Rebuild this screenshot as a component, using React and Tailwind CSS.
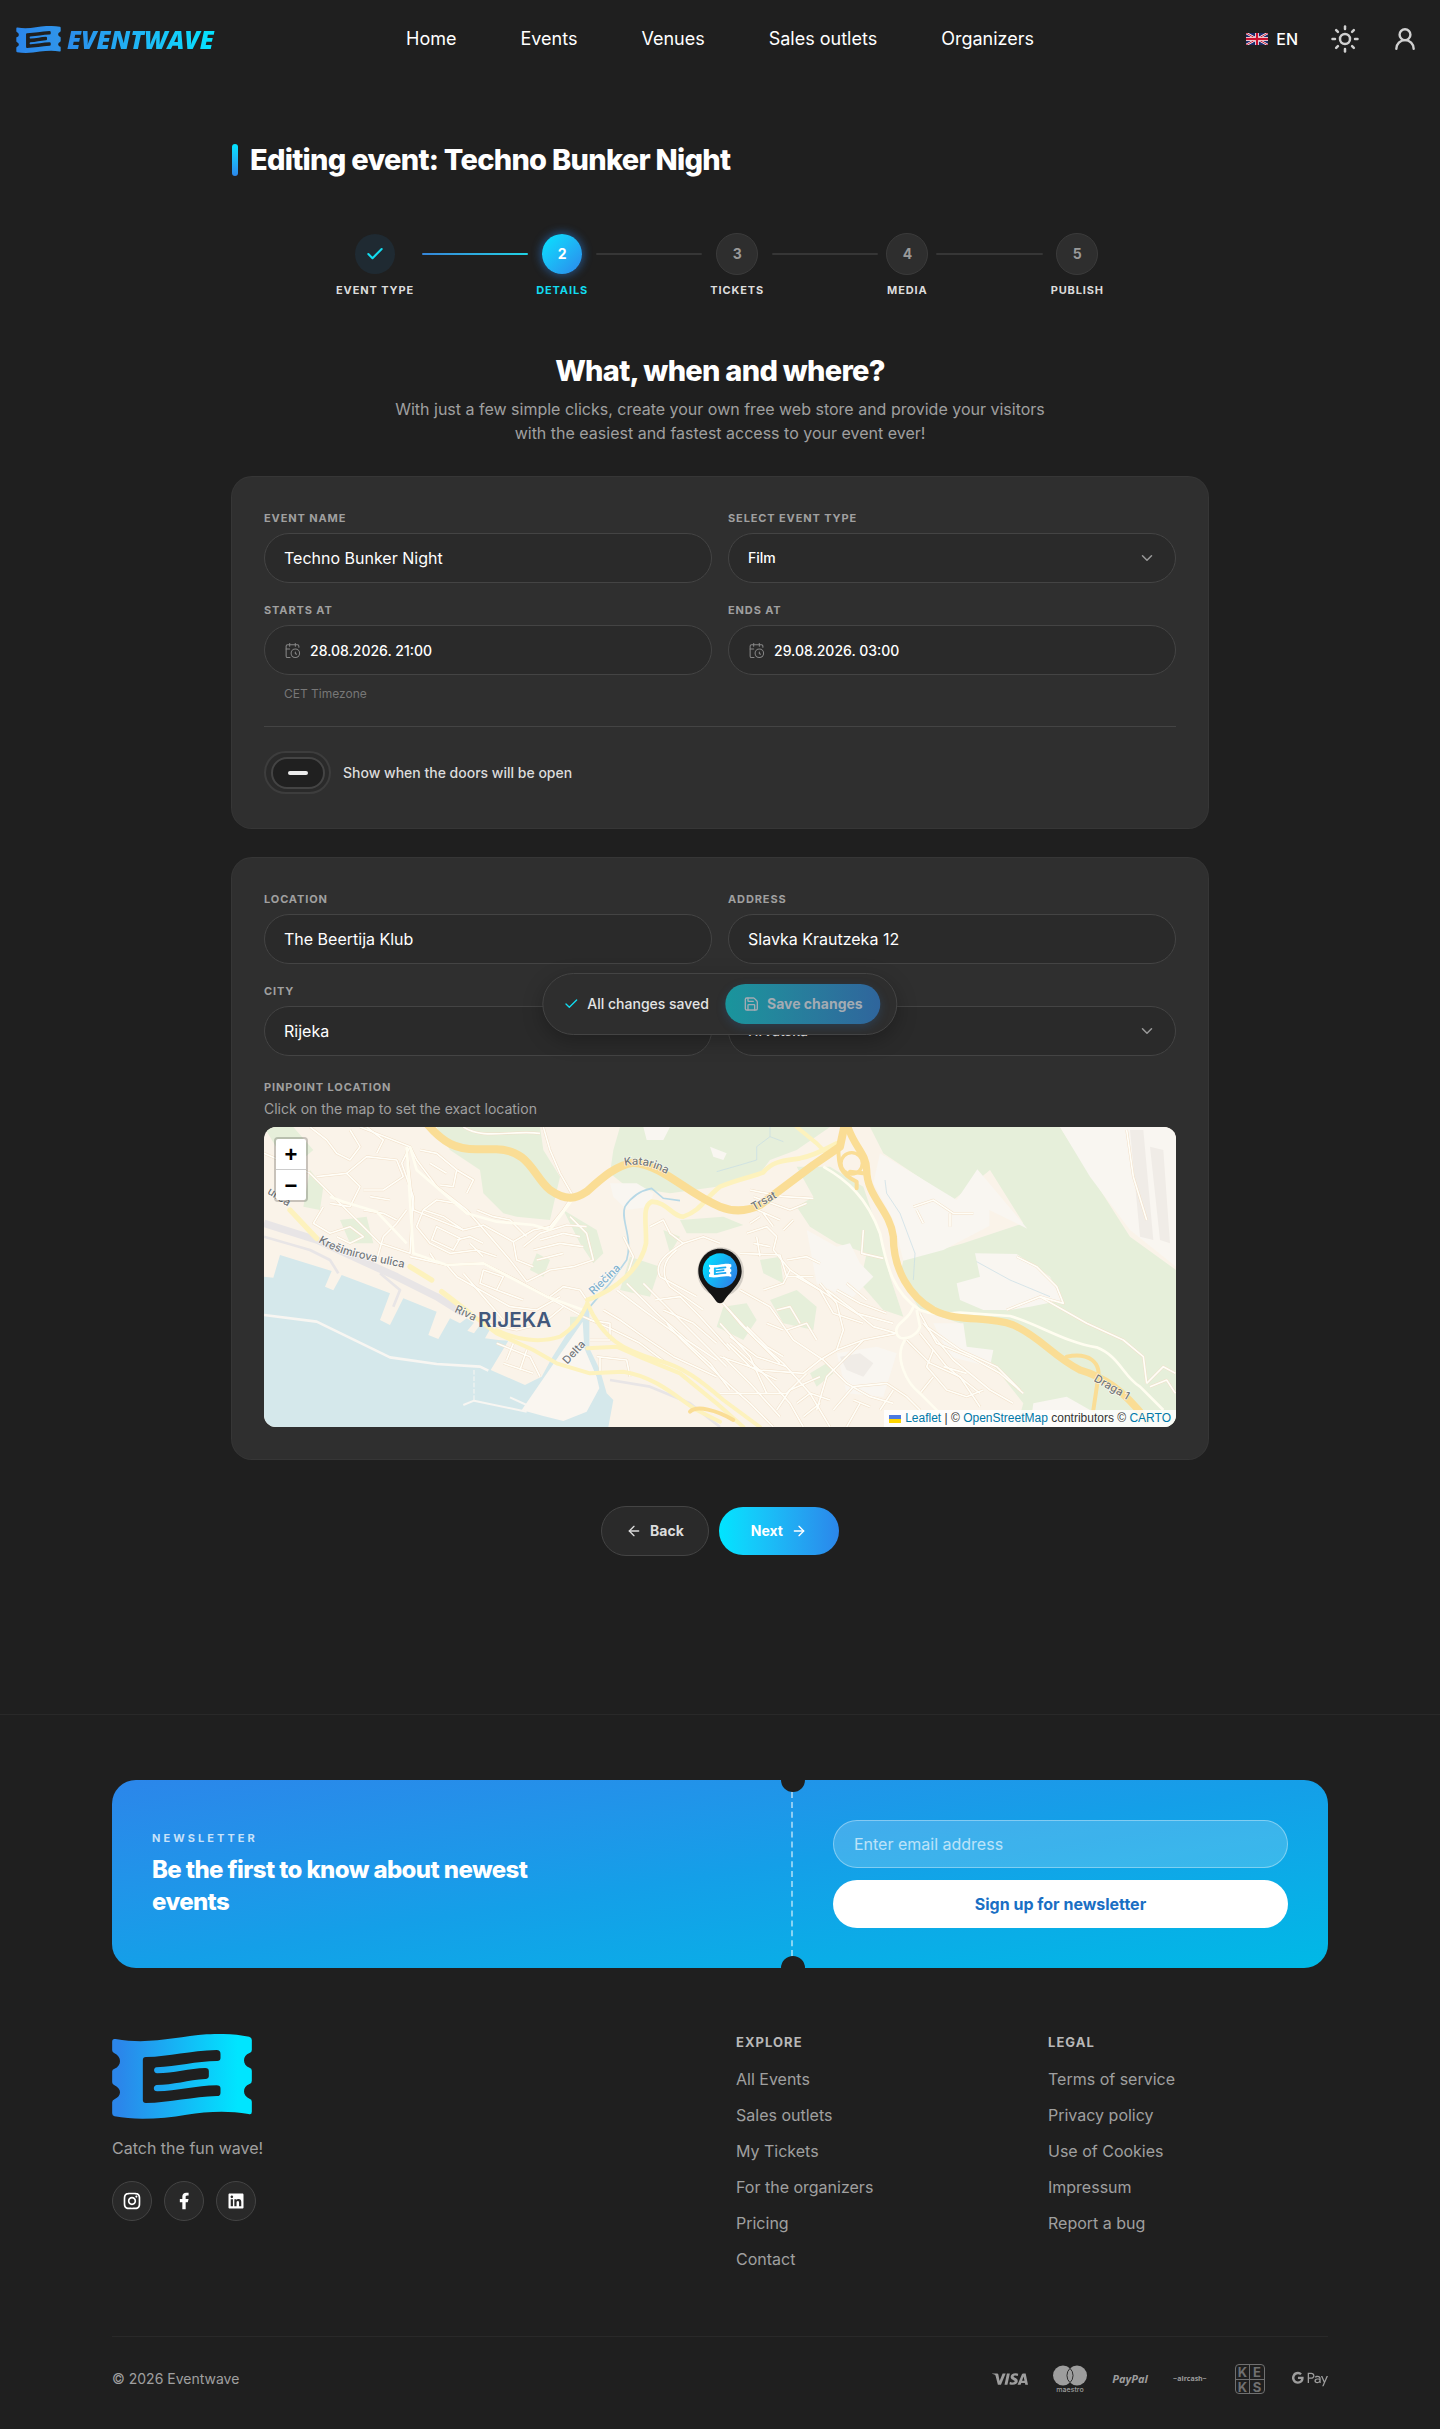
import { ArrowLeft, ArrowRight, CalendarClock, Check, ChevronDown, Save, Sun, UserRound } from "lucide-react";
import { RiFacebookFill, RiInstagramLine, RiLinkedinBoxFill } from "react-icons/ri";
import { SiGooglepay, SiVisa } from "react-icons/si";

const navLinks = ["Home", "Events", "Venues", "Sales outlets", "Organizers"];
const exploreLinks = ["All Events", "Sales outlets", "My Tickets", "For the organizers", "Pricing", "Contact"];
const legalLinks = ["Terms of service", "Privacy policy", "Use of Cookies", "Impressum", "Report a bug"];
const steps = ["Event type", "Details", "Tickets", "Media", "Publish"];
const currentStep = 1;

const fieldStyle =
  "h-[50px] w-full appearance-none rounded-full border border-[#444444] bg-[#2a2a2a] px-[19px] text-white outline-none";

const ticketPath =
  "M37 95Q37 85 47 87C150 105 230 80 320 73C370 70 410 73 448 80Q456 82 456 90V120Q456 127 449 129C427 136 427 166 449 173Q456 175 456 182V212Q456 220 449 222C427 230 427 258 449 266Q456 268 456 275V305Q456 315 446 312C380 300 320 305 260 314C190 326 110 332 44 319Q37 317 37 310V277Q37 271 44 268C66 258 66 236 44 226Q37 223 37 217V184Q37 178 44 176C66 168 66 140 44 130Q37 127 37 121ZM129 150Q129 141 138 141C210 140 270 122 350 120Q362 120 362 132V144Q362 153 352 153C290 153 230 170 170 172C160 173 160 190 172 190C220 190 270 175 316 174Q327 174 327 184V198Q327 206 317 207C265 210 220 225 170 225C159 227 159 244 172 244C230 244 290 226 350 226Q362 226 362 236V248Q362 258 352 258C280 260 210 278 138 279Q129 279 129 270Z";

function Ticket({ id, from, to, className }) {
  return (
    <svg viewBox="37 72 419 255" className={className} aria-hidden="true">
      <defs>
        <linearGradient id={id} x1="0" y1="0" x2="1" y2="0">
          <stop offset="0.05" stopColor={from} />
          <stop offset="0.9" stopColor={to} />
        </linearGradient>
      </defs>
      <path fillRule="evenodd" fill={`url(#${id})`} d={ticketPath} />
    </svg>
  );
}

function UkFlag() {
  return (
    <svg viewBox="0 0 60 30" preserveAspectRatio="none" className="h-3 w-[22px]" aria-hidden="true">
      <path fill="#1b2a6b" d="M0 0h60v30H0z" />
      <path stroke="#fff" strokeWidth="6" d="M0 0l60 30M60 0L0 30" />
      <path stroke="#c8102e" strokeWidth="2.5" d="M0 0l60 30M60 0L0 30" />
      <path stroke="#fff" strokeWidth="10" d="M30 0v30M0 15h60" />
      <path stroke="#c8102e" strokeWidth="6" d="M30 0v30M0 15h60" />
    </svg>
  );
}

function Header() {
  return (
    <header className="grid h-[78px] grid-cols-[1fr_auto_1fr] items-center px-4">
      <a href="#" className="flex items-center gap-1.5">
        <Ticket id="logoTop" from="#2b86ea" to="#2f93ea" className="h-[27px] w-[45px]" />
        <span className="bg-linear-to-r from-[#2b8bea] to-[#00e5ff] bg-clip-text pr-1 font-['Open_Sans'] text-[25px] leading-8 font-extrabold italic text-transparent">
          EVENTWAVE
        </span>
      </a>
      <nav className="flex gap-16">
        {navLinks.map((item) => (
          <a key={item} href="#" className="text-lg leading-7 text-white">{item}</a>
        ))}
      </nav>
      <div className="flex items-center justify-end gap-8 pr-1.5 text-[#d0d0d0]">
        <button type="button" className="flex items-center gap-2 text-base font-medium text-white">
          <UkFlag />
          EN
        </button>
        <button type="button" aria-label="Toggle theme"><Sun size={30} /></button>
        <button type="button" aria-label="Account"><UserRound size={26} strokeWidth={2.2} /></button>
      </div>
    </header>
  );
}

function StepCircle({ index }) {
  if (index < currentStep) {
    return (
      <span className="flex size-10 items-center justify-center rounded-full bg-[#1f2a32] text-[#12dcf0]">
        <Check size={20} strokeWidth={2.5} />
      </span>
    );
  }
  if (index === currentStep) {
    return (
      <span className="flex size-10 items-center justify-center rounded-full bg-linear-to-br from-[#00e5ff] to-[#2b86ea] text-sm font-bold text-white shadow-[0_0_8px_2px_rgba(43,134,234,0.45)]">
        {index + 1}
      </span>
    );
  }
  return (
    <span className="flex size-[42px] items-center justify-center rounded-full border border-[#3b3b3b] bg-[#2e2e2e] text-sm font-bold text-[#9a9a9a]">
      {index + 1}
    </span>
  );
}

function StepLine({ done }) {
  return (
    <li
      aria-hidden="true"
      className={
        done
          ? "mx-2 mt-5 h-0.5 flex-1 rounded-full bg-linear-to-r from-[#3585d8] to-[#1fd3e4]"
          : "mx-2 mt-5 h-0.5 flex-1 rounded-full bg-[#363636]"
      }
    />
  );
}

function Stepper() {
  const items = [];
  steps.forEach((step, i) => {
    if (i > 0) items.push(<StepLine key={"line" + i} done={i <= currentStep} />);
    items.push(
      <li key={step} className="flex flex-col items-center gap-1.5">
        <span className="flex h-[42px] items-center"><StepCircle index={i} /></span>
        <span
          className={
            i === currentStep
              ? "text-[11px] leading-[18px] font-bold tracking-[0.08em] text-[#12dcf0] uppercase"
              : "text-[11px] leading-[18px] font-bold tracking-[0.08em] text-[#dcdcdc] uppercase"
          }
        >
          {step}
        </span>
      </li>
    );
  });
  return <ol className="mx-auto mt-[57px] flex max-w-3xl items-start">{items}</ol>;
}

function Field({ id, label, children, hint }) {
  return (
    <div>
      <label htmlFor={id} className="mb-1.5 block text-[11px] leading-[18px] font-bold tracking-[0.08em] text-[#a0a0a0] uppercase">
        {label}
      </label>
      {children}
      {hint && <p className="mt-[11px] pl-5 text-xs text-[#777777]">{hint}</p>}
    </div>
  );
}

function TextField({ id, label, value }) {
  return (
    <Field id={id} label={label}>
      <input id={id} type="text" defaultValue={value} className={fieldStyle + " text-base"} />
    </Field>
  );
}

function SelectField({ id, label, options }) {
  return (
    <Field id={id} label={label}>
      <div className="relative">
        <select id={id} className={fieldStyle + " text-sm font-medium"}>
          {options.map((o) => <option key={o}>{o}</option>)}
        </select>
        <ChevronDown size={18} className="pointer-events-none absolute top-4 right-5 text-[#9a9a9a]" />
      </div>
    </Field>
  );
}

function DateField({ id, label, value, hint }) {
  return (
    <Field id={id} label={label} hint={hint}>
      <div className="relative">
        <CalendarClock size={17} strokeWidth={1.5} className="absolute top-[17px] left-5 text-[#868686]" />
        <input id={id} type="text" defaultValue={value} className={fieldStyle + " pl-[45px] text-sm font-medium"} />
      </div>
    </Field>
  );
}

const streets = [
  "M330 51L480 110L455 160L490 260L480 430L390 400L250 260L180 190L42 130",
  "M480 110L500 150L560 230L650 300L720 380L780 450L830 515",
  "M470 120L490 300L640 360L700 345L790 395L850 360L900 350L940 300L960 270",
  "M880 51L900 120L930 190L970 260",
  "M640 51C700 90 780 60 870 70",
  "M480 440L590 465L700 460L800 510L890 560L1000 620",
  "M590 465L620 500L700 545L780 590L860 600L930 560",
  "M380 450L400 380L440 340L470 300",
  "M830 515L900 480L970 470L1030 450L1010 370L960 320",
  "M900 560L940 530L990 540L1010 570",
  "M640 360L580 320L520 300L500 350L540 400L600 430L680 420L740 440",
  "M520 300L560 270L620 280L650 310",
  "M560 350L630 385L610 420L545 390Z",
  "M200 200L290 190L330 230L300 290L240 280",
  "M290 190L350 140L440 150L460 200L400 240L340 240",
  "M300 60L330 110L300 150L260 130L230 90L180 51",
  "M350 51L400 90L380 130",
  "M220 290L190 340L240 370L300 350L340 380L300 400L260 380",
  "M340 300L400 310L440 330M360 260L420 270",
  "M510 120L560 130L620 180L610 230L570 225M540 160L590 190M620 180L670 210L650 250",
  "M700 480L760 500L740 540L690 520ZM740 540L820 570",
  "M640 490L700 560L760 630M700 640L800 660L880 640L940 590",
  "M660 400L700 440M620 390L660 380L700 400M540 430L560 460M680 300L730 320L780 330L830 380",
  "M820 410L870 370L950 345L1010 350M790 395L800 450L850 470",
  "M870 390L940 370L990 380M850 420L930 400L1000 410M860 450L940 430",
  "M740 700L840 740L870 800M760 760L850 790M790 700L770 750M830 720L810 780",
  "M1000 620C1100 660 1150 690 1170 700L1250 760",
  "M1060 600L1110 630L1180 680L1270 740L1400 800",
  "M1250 640C1300 700 1350 740 1410 800L1500 880L1570 951",
  "M1180 520L1260 600L1340 680L1430 770",
  "M1215 570L1290 560L1350 620L1440 720",
  "M1340 560L1230 500C1210 460 1250 430 1300 400",
  "M1360 600L1260 530C1230 490 1240 450 1280 420",
  "M1100 540L1180 600L1290 680L1380 760L1440 840",
  "M1130 520L1220 610L1310 690L1400 750",
  "M1240 600L1330 640L1400 700",
  "M1020 630L1080 640V690H1020M1040 740L1130 750L1140 800M1050 740V790",
  "M1200 350L1240 330L1260 370L1300 400L1360 380L1410 400",
  "M1120 380L1150 440L1130 500",
  "M1400 560L1520 690L1600 760L1680 850L1740 951",
  "M1440 700L1540 790L1620 880L1660 951M1420 740L1500 820L1590 920",
];

const eastStreets = [
  "M60 540L150 590L220 690L310 750L380 820L450 860L520 880",
  "M0 740L120 780L250 790L300 750L350 720L430 690L530 670",
  "M0 850L200 850L240 810L260 790",
  "M10 580L60 640L180 760M0 640L90 740L140 850",
  "M30 680L110 740L200 770M20 700L90 770L170 810M80 650L140 710L190 740",
  "M80 370L140 350L170 380L160 420L210 480L330 560L410 610L520 640",
  "M100 400L150 410M60 430L180 435M130 310L160 350M100 260L210 300L260 280M90 290L180 330",
  "M90 240L190 260L280 265M180 435L200 500L280 500",
  "M90 340L120 320M110 380L120 440M200 450L260 440L300 460M220 330L190 360",
  "M300 520L350 580L370 660L350 720",
  "M320 540L400 600L460 650L530 670",
  "M350 540L420 580L500 610M380 520L440 570",
  "M210 480L190 520L130 540M230 500L300 540L340 610L430 640",
  "M170 600L210 590L240 640M200 660L260 640L290 690M140 640L190 660",
  "M430 690L380 740L320 800L290 900",
  "M600 610L650 700L750 740L840 790L910 850",
  "M610 640L700 750L810 840L880 880",
  "M620 650L720 720L830 770L900 840M600 670L680 770L780 850",
  "M560 690L630 760L720 800L780 890",
  "M640 720L620 770L680 840L740 860L790 840M670 770L740 790",
  "M340 900L400 830L500 820L560 860L600 900",
  "M380 951L420 880M600 850L640 800M170 900L210 840L300 800",
  "M230 880L270 850L330 870M250 920L300 880M400 870L450 890M520 840L480 900",
  "M430 360L425 430L490 445M580 290L640 270L700 310L760 310M690 310L690 350M610 340L590 300",
  "M860 600L960 560L1030 580L1010 530L950 470L890 440",
  "M960 560L1100 640L1210 690L1270 740L1280 820",
  "M1220 60L1240 200L1280 330M1280 820L1330 770L1366 790M1290 830L1340 810L1366 850",
];

const eastArterials = [
  "M310 170C380 210 440 260 480 370C500 470 520 550 600 600C650 620 680 610 720 608L870 618C950 640 1040 700 1130 712C1200 740 1210 800 1260 830L1330 900",
  "M580 590C570 630 520 640 530 670C540 700 590 680 600 650L590 600",
  "M555 690C520 740 560 820 600 850L660 910",
];

function MapDrawing() {
  return (
    <svg viewBox="42 51 2736 900" preserveAspectRatio="xMidYMid slice" fill="none" className="block h-full w-full" aria-hidden="true">
      <defs>
        <linearGradient id="pinFill" x1="0" y1="0" x2="1" y2="0.6">
          <stop offset="0.1" stopColor="#00e0ff" />
          <stop offset="1" stopColor="#2b86ea" />
        </linearGradient>
        <path id="katarina" d="M1124 168C1165 158 1205 165 1272 204" />
        <path id="kresimirova" d="M204 396C270 440 360 450 500 482" />
      </defs>

      <rect x="42" y="51" width="2736" height="900" fill="#faf3e9" />

      {/* woods and parks */}
      <g fill="#e6efda">
        <path d="M560 51H870L880 120L930 200L900 330L800 320L760 310L700 250L690 180L600 120Z" />
        <path d="M1110 51H1740L1640 120L1560 150L1530 190L1400 230L1260 250L1130 230L1080 190L1090 120Z" />
        <path d="M1290 330L1420 320L1480 345L1400 370L1310 370Z" />
        <path d="M1640 170L1740 170L1840 230L1890 380L1920 500L1960 620L1900 600L1830 520L1850 430L1760 400L1680 350L1640 290L1690 260Z" />
        <path d="M1860 51H2430L2640 380L2778 480V951H2300L2320 880L2210 740L2140 720L2130 640L2010 600L1950 500L1960 450L2140 400L2320 340L2220 180L2110 270L1900 130Z" />
        <path d="M1530 450L1590 440L1600 520L1540 490ZM1420 590L1490 580L1520 630L1480 690L1400 650ZM1560 570L1640 540L1700 590L1690 660L1600 640Z" />
        <path d="M42 51H130L190 120L120 180L90 130ZM180 180L220 230L210 300L160 290ZM270 330L350 320L370 400L300 400Z" />
        <path d="M940 300L1040 360L1060 430L1030 460L990 400ZM860 430L900 450L880 500L840 480ZM960 620H1010L1000 670L960 680Z" />
        <path d="M1140 440L1230 470L1200 560L1110 540ZM1240 360L1290 380L1260 430Z" />
        <path d="M1680 790L1730 760L1750 790L1700 830Z" />
      </g>

      {/* open ground */}
      <g fill="#f9f6f1">
        <path d="M1890 130L2120 270L2182 178L2332 356L2218 300V348L2080 420L1960 452L1930 330L1870 220Z" />
        <path d="M2175 430L2300 432L2400 500L2440 570L2340 590L2280 600L2200 600L2130 570L2120 520L2190 500Z" />
        <path d="M2430 51H2778V470L2640 360L2520 200Z" />
        <path d="M1670 360L1760 410L1800 400L1830 460L1870 500L1800 570L1700 520Z" />
        <path d="M2050 640H2140L2150 710L2230 720L2220 770L2100 740ZM2350 880L2450 860L2520 900V951H2340Z" />
        <path d="M1760 730L1880 710L1940 730L1900 860L1790 850Z" />
        <path d="M1180 51H1260L1240 90L1190 90ZM1380 110L1430 130L1420 150L1390 140Z" />
        <path d="M1080 220L1160 220L1210 250L1200 290L1130 300L1090 260Z" />
      </g>
      <g fill="#f0ece7">
        <path d="M2640 60L2680 60L2710 390L2670 380ZM2700 110L2740 120L2760 400L2730 390Z" />
        <path d="M1770 740L1830 730L1870 760L1840 800L1790 780Z" />
      </g>

      {/* railway yard */}
      <g stroke="#e8e5e6" strokeLinejoin="round">
        <path strokeWidth="22" d="M42 340L200 390L330 450L440 500L560 560L640 610" />
        <path strokeWidth="8" d="M42 380L180 420L240 450L265 490M390 490L450 540L430 590M1080 810L1200 830L1320 880L1410 951M820 890L940 860L1040 830" />
      </g>

      {/* harbour */}
      <path
        fill="#d5e8eb"
        d="M42 500L70 503L90 435L170 460L245 483L225 530L250 541L275 495L420 550L390 630L420 645L460 565L560 605L535 675L565 687L600 625L630 640L650 625L672 638L652 662L672 670L692 642L722 655L705 685L745 690L775 692L722 780L825 825L850 812L875 800L905 745L1002 590L1018 595V715L1050 780L1070 850L1090 870L1075 951H42Z"
      />
      <path fill="#faf6f0" d="M998 635L1003 715L1040 800L1048 835L1010 905L940 933L880 918L815 900L925 740Z" />
      <g stroke="#f8f6f2" strokeLinejoin="round">
        <path strokeWidth="8" d="M42 615L200 635L420 742L560 762L690 770L715 782" />
        <path strokeWidth="6" d="M640 885L672 872L830 905M780 862L830 885" />
        <path strokeWidth="3" strokeDasharray="14 5" d="M672 780V872" />
      </g>
      <path stroke="#b7d8e6" strokeWidth="5" d="M1020 590L1080 520L1130 450C1150 380 1110 330 1125 290C1150 250 1180 240 1205 235L1240 265L1290 272" />
      <path stroke="#c6dde6" strokeWidth="2" d="M1560 51V80L1520 110V150L1470 165L1400 185M1560 80L1600 95M1905 210L1910 250L1950 310L1995 430L1990 510M2180 455L2280 510L2400 560" />

      {/* small streets */}
      <g stroke="#f1dfc9" strokeLinejoin="round" strokeWidth="8">
        {streets.map((d) => <path key={d} d={d} />)}
        <g transform="translate(1410 0)">{eastStreets.map((d) => <path key={d} d={d} />)}</g>
      </g>
      <g stroke="#fffef8" strokeLinejoin="round" strokeWidth="5">
        {streets.map((d) => <path key={d} d={d} />)}
        <g transform="translate(1410 0)">{eastStreets.map((d) => <path key={d} d={d} />)}</g>
      </g>
      <g stroke="#fffdf0" strokeLinejoin="round" strokeWidth="8">
        <path d="M470 110L490 430L590 465L700 460L890 560L1000 600" />
        <path d="M480 110L500 180L650 310L740 335L850 345L900 360L970 265" />
        <path d="M240 260L280 275L380 305L470 400" />
        <g transform="translate(1410 0)">{eastArterials.map((d) => <path key={d} d={d} />)}</g>
      </g>

      {/* secondary roads */}
      <g stroke="#fdf2bd" strokeWidth="12" strokeLinecap="round" strokeLinejoin="round">
        <path strokeWidth="16" d="M120 300L200 385M480 470L545 510M575 545L660 610" />
        <path d="M660 610L740 670L850 720L920 760L1020 790L1120 785C1220 800 1290 870 1340 900L1410 935" />
        <path d="M740 660C800 690 870 700 930 680C980 650 1000 610 1012 580" />
        <path d="M1012 580C1060 690 1120 720 1220 750C1300 770 1350 810 1420 870L1530 951" />
        <path d="M1012 715L1100 710L1180 745L1290 790L1400 880L1480 951" />
        <path strokeWidth="14" d="M1012 570C1100 540 1175 470 1188 400C1190 340 1175 290 1205 275C1250 275 1270 322 1300 320C1355 300 1360 270 1410 230C1470 205 1510 200 1540 187C1570 150 1610 152 1650 145C1700 135 1730 115 1760 100" />
        <path d="M1640 51L1700 100L1730 130" />
      </g>

      {/* main roads */}
      <g stroke="#fadd95" strokeLinecap="round" strokeLinejoin="round">
        <path strokeWidth="24" d="M530 40C580 100 620 118 680 118H740C840 120 850 200 900 240C950 275 980 265 1010 245C1060 200 1100 165 1150 158C1240 165 1310 250 1410 290C1460 310 1500 300 1530 285L1690 165L1770 110L1785 40" />
        <path strokeWidth="22" d="M1790 40C1810 110 1850 130 1850 180C1850 260 1920 300 1930 380C1930 480 1980 560 2050 600C2130 640 2210 615 2290 645C2370 680 2410 740 2490 780C2560 800 2620 840 2690 930" />
        <path strokeWidth="12" d="M1765 110C1765 170 1770 190 1820 215V235M1840 190L1800 185" />
        <path strokeWidth="12" d="M2450 740C2510 728 2560 750 2542 820L2530 900" />
        <path strokeWidth="12" d="M1320 905C1340 885 1400 900 1450 930" />
        <circle cx="1805" cy="160" r="32" strokeWidth="10" />
      </g>

      {/* labels */}
      <g className="font-['Inter']" fill="#74787a" stroke="#ffffff" strokeOpacity="0.7" strokeWidth="4" paintOrder="stroke" fontSize="33" fontWeight="500">
        <text><textPath href="#katarina">Katarina</textPath></text>
        <text><textPath href="#kresimirova">Krešimirova ulica</textPath></text>
        <text transform="translate(50 250) rotate(32)">ulica</text>
        <text transform="translate(612 605) rotate(25)">Riva</text>
        <text transform="translate(952 764) rotate(-47)">Delta</text>
        <text transform="translate(1512 302) rotate(-30)">Trsat</text>
        <text transform="translate(2530 812) rotate(30)">Draga 1</text>
        <text fill="#7fb0cc" transform="translate(1030 556) rotate(-44)">Riečina</text>
      </g>
      <text x="684" y="652" className="font-['Inter']" fill="#42587c" fontSize="62" fontWeight="600">RIJEKA</text>

      {/* marker */}
      <ellipse cx="1412" cy="486" rx="70" ry="74" fill="#000000" opacity="0.15" />
      <path fill="#141414" d="M1410 416C1447 416 1475 446 1475 484C1475 522 1440 545 1422 573C1416 582 1404 582 1398 573C1380 545 1345 522 1345 484C1345 446 1373 416 1410 416Z" />
      <circle cx="1410" cy="482" r="52" fill="url(#pinFill)" />
      <g transform="translate(1371 452) scale(0.16) translate(0 -12)">
        <path fillRule="evenodd" fill="#ffffff" d={ticketPath} />
      </g>
    </svg>
  );
}

function LocationMap() {
  return (
    <div className="relative mt-2 h-[300px] overflow-hidden rounded-xl font-['Liberation_Sans']">
      <MapDrawing />
      <div className="absolute top-2.5 left-2.5 flex flex-col rounded border-2 border-black/20 bg-white bg-clip-padding text-[22px] font-bold text-black">
        <button type="button" aria-label="Zoom in" className="flex h-[31px] w-[30px] items-center justify-center border-b border-[#cccccc]">+</button>
        <button type="button" aria-label="Zoom out" className="flex size-[30px] items-center justify-center">−</button>
      </div>
      <div className="absolute right-0 bottom-0 flex items-center gap-1 bg-white/80 px-[5px] text-xs leading-[17px] text-[#333333]">
        <svg viewBox="0 0 12 8" className="h-2 w-3" aria-hidden="true">
          <path fill="#4c7be1" d="M0 0h12v4H0z" />
          <path fill="#ffd500" d="M0 4h12v4H0z" />
        </svg>
        <span>
          <a href="#" className="text-[#0078a8]">Leaflet</a> | © <a href="#" className="text-[#0078a8]">OpenStreetMap</a> contributors © <a href="#" className="text-[#0078a8]">CARTO</a>
        </span>
      </div>
    </div>
  );
}

function SaveBar() {
  return (
    <div className="absolute top-[115px] left-1/2 flex -translate-x-1/2 items-center gap-4 rounded-full border border-[#444444] bg-[#2e2e2e] py-2.5 pr-4 pl-5 whitespace-nowrap shadow-[0_6px_20px_rgba(0,0,0,0.25)]">
      <span className="flex items-center gap-2 text-sm font-medium text-[#e4e4e4]">
        <Check size={16} className="text-[#12dcf0]" />
        All changes saved
      </span>
      <button
        type="button"
        disabled
        className="flex h-10 items-center gap-2 rounded-full bg-linear-to-r from-[#19959c] to-[#2f659c] px-[18px] text-sm font-bold text-[#a3abb3] shadow-[0_3px_10px_rgba(43,110,180,0.25)]"
      >
        <Save size={16} />
        Save changes
      </button>
    </div>
  );
}

function Newsletter() {
  return (
    <section className="relative grid grid-cols-[14fr_11fr] overflow-hidden rounded-3xl bg-linear-to-br from-[#2b86ea] via-[#149fe8] to-[#00b9e6]">
      <div className="flex flex-col justify-center gap-2 px-10">
        <p className="text-[11px] leading-4 font-bold tracking-[0.28em] text-white/75">NEWSLETTER</p>
        <h2 className="max-w-[400px] text-2xl leading-8 font-extrabold tracking-tight text-white">
          Be the first to know about newest events
        </h2>
      </div>
      <form className="relative flex flex-col gap-3 p-10">
        <span className="absolute inset-y-3 -left-0.5 border-l-2 border-dashed border-white/50" />
        <span className="absolute -top-3 -left-3 size-6 rounded-full bg-[#1f1f1f]" />
        <span className="absolute -bottom-3 -left-3 size-6 rounded-full bg-[#1f1f1f]" />
        <input
          type="email"
          aria-label="Email address"
          placeholder="Enter email address"
          className="h-12 w-full rounded-full border border-white/35 bg-white/18 px-5 text-base text-white outline-none placeholder:text-white/65"
        />
        <button type="button" className="h-12 rounded-full bg-white text-base font-bold text-[#1a6fc4]">
          Sign up for newsletter
        </button>
      </form>
    </section>
  );
}

function LinkColumn({ title, links }) {
  return (
    <div className="col-span-3">
      <h3 className="text-[13px] leading-4 font-bold tracking-[0.08em] text-[#b8b8b8] uppercase">{title}</h3>
      <ul className="mt-[17px] flex flex-col gap-3">
        {links.map((item) => (
          <li key={item}><a href="#" className="text-base text-[#a0a0a0]">{item}</a></li>
        ))}
      </ul>
    </div>
  );
}

function Payments() {
  return (
    <div className="flex h-[30px] items-center gap-6 text-[#9d9d9d]">
      <SiVisa size={36} />
      <span className="flex w-9 flex-col items-center">
        <svg viewBox="0 0 36 21" fill="none" className="h-[21px] w-9" aria-hidden="true">
          <circle cx="11" cy="10.5" r="10" fill="currentColor" />
          <circle cx="25" cy="10.5" r="10" fill="currentColor" />
          <path d="M18 3.3a10 10 0 0 1 0 14.4a10 10 0 0 1 0-14.4Z" stroke="#1f1f1f" strokeWidth="0.9" />
        </svg>
        <span className="text-[7px] leading-[7px] font-medium">maestro</span>
      </span>
      <span className="flex w-9 justify-center font-['Open_Sans'] text-[11px] font-bold italic">PayPal</span>
      <span className="flex w-9 justify-center font-['Open_Sans'] text-[7px] font-bold">−aircash−</span>
      <span className="flex w-9 justify-center">
        <span className="grid size-[30px] grid-cols-2 rounded-sm border border-[#707070] text-[13px] leading-[14px] font-bold text-[#707070]">
          <span className="border-r border-b border-[#707070] text-center">K</span>
          <span className="border-b border-[#707070] text-center">E</span>
          <span className="border-r border-[#707070] text-center">K</span>
          <span className="text-center">S</span>
        </span>
      </span>
      <SiGooglepay size={36} />
    </div>
  );
}

function Footer() {
  const social = [
    { name: "Instagram", Icon: RiInstagramLine },
    { name: "Facebook", Icon: RiFacebookFill },
    { name: "LinkedIn", Icon: RiLinkedinBoxFill },
  ];

  return (
    <footer className="border-t border-[#292929] pt-[65px]">
      <div className="mx-auto max-w-7xl px-8">
        <Newsletter />
        <div className="mt-[66px] grid grid-cols-12 gap-8">
          <div className="col-span-6">
            <Ticket id="logoFooter" from="#2b86ea" to="#00e5ff" className="h-[85px] w-[140px]" />
            <p className="mt-[17px] text-base text-[#a0a0a0]">Catch the fun wave!</p>
            <div className="mt-[21px] flex gap-3">
              {social.map(({ name, Icon }) => (
                <a key={name} href="#" aria-label={name} className="flex size-10 items-center justify-center rounded-full border border-[#444444] bg-[#292929] text-white">
                  <Icon size={20} />
                </a>
              ))}
            </div>
          </div>
          <LinkColumn title="Explore" links={exploreLinks} />
          <LinkColumn title="Legal" links={legalLinks} />
        </div>
        <div className="mt-[65px] flex items-center justify-between border-t border-[#292929] pt-[27px] pb-9">
          <p className="text-sm text-[#a0a0a0]">© 2026 Eventwave</p>
          <Payments />
        </div>
      </div>
    </footer>
  );
}

export default function App() {
  return (
    <div className="min-h-screen bg-[#1f1f1f] font-['Inter',sans-serif] text-white">
      <Header />
      <main className="mx-auto max-w-[1024px] px-6 pt-[66px] pb-[158px]">
        <div className="flex items-center gap-3">
          <span className="h-8 w-1.5 rounded-full bg-linear-to-b from-[#00e5ff] to-[#2b86ea]" />
          <h1 className="text-[29px] leading-8 font-extrabold tracking-tight">Editing event: Techno Bunker Night</h1>
        </div>

        <Stepper />

        <div className="mt-[54px] text-center">
          <h2 className="text-[29px] leading-9 font-extrabold tracking-tight">What, when and where?</h2>
          <p className="mx-auto mt-2 max-w-[680px] text-base text-[#a0a0a0]">
            With just a few simple clicks, create your own free web store and provide your visitors with the easiest and fastest access to your event ever!
          </p>
        </div>

        <section className="mt-8 rounded-[20px] bg-[#2f2f2f] px-8 pt-8 pb-[34px] ring-1 ring-[#363636]">
          <div className="grid grid-cols-2 gap-x-4 gap-y-[18px]">
            <TextField id="name" label="Event name" value="Techno Bunker Night" />
            <SelectField id="type" label="Select event type" options={["Film", "Concert", "Theatre"]} />
            <DateField id="starts" label="Starts at" value="28.08.2026. 21:00" hint="CET Timezone" />
            <DateField id="ends" label="Ends at" value="29.08.2026. 03:00" />
          </div>
          <label className="relative mt-6 flex items-center gap-3 border-t border-[#444444] pt-6 text-sm font-medium text-[#dcdcdc]">
            <input type="checkbox" className="peer sr-only" />
            <span className="flex h-[43px] w-[67px] items-center justify-center rounded-full border-2 border-[#3d3d3d] bg-[#2a2a2a] peer-checked:border-[#12dcf0]">
              <span className="flex h-8 w-[54px] items-center justify-center rounded-full border-2 border-[#444444] bg-[#202020]">
                <span className="h-1 w-5 rounded-full bg-[#ececec]" />
              </span>
            </span>
            Show when the doors will be open
          </label>
        </section>

        <section className="relative mt-[30px] rounded-[20px] bg-[#2f2f2f] p-8 ring-1 ring-[#363636]">
          <div className="grid grid-cols-2 gap-x-4 gap-y-[18px]">
            <TextField id="location" label="Location" value="The Beertija Klub" />
            <TextField id="address" label="Address" value="Slavka Krautzeka 12" />
            <TextField id="city" label="City" value="Rijeka" />
            <SelectField id="country" label="Country" options={["Hrvatska", "Slovenija"]} />
          </div>
          <h3 className="mt-[22px] text-[11px] leading-[18px] font-bold tracking-[0.08em] text-[#a0a0a0] uppercase">Pinpoint location</h3>
          <p className="mt-[3px] text-sm text-[#a0a0a0]">Click on the map to set the exact location</p>
          <LocationMap />
          <SaveBar />
        </section>

        <div className="mt-[47px] flex items-center justify-center gap-2.5 text-sm font-bold">
          <button type="button" className="flex h-[50px] items-center gap-2 rounded-full border border-[#444444] bg-[#2a2a2a] px-6 text-[#dcdcdc]">
            <ArrowLeft size={16} />
            Back
          </button>
          <button type="button" className="flex h-12 items-center gap-2 rounded-full bg-linear-to-r from-[#00e5ff] to-[#2b86ea] px-8 text-white">
            Next
            <ArrowRight size={16} />
          </button>
        </div>
      </main>
      <Footer />
    </div>
  );
}
